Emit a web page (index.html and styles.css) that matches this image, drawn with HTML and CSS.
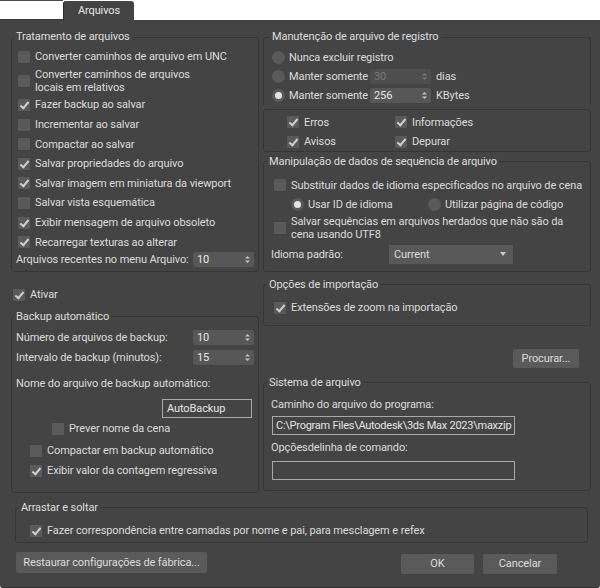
FILE: index.html
```html
<!DOCTYPE html>
<html lang="pt">
<head>
<meta charset="utf-8">
<title>Arquivos</title>
<link rel="stylesheet" href="styles.css">
</head>
<body>
<div class="tabbar">
  <div class="tab-spacer"></div>
  <div class="tab">Arquivos</div>
  <div class="tab-rest"></div>
</div>
<div class="panel">
  <div class="columns">
    <div class="col col-left">
      <fieldset class="group g-files">
        <legend>Tratamento de arquivos</legend>
        <div class="body">
          <label class="row ind"><span class="box"></span>Converter caminhos de arquivo em UNC</label>
          <label class="row ind two"><span class="box"></span><span>Converter caminhos de arquivos<br>locais em relativos</span></label>
          <label class="row ind"><span class="box on"></span>Fazer backup ao salvar</label>
          <label class="row ind"><span class="box"></span>Incrementar ao salvar</label>
          <label class="row ind"><span class="box"></span>Compactar ao salvar</label>
          <label class="row ind"><span class="box on"></span>Salvar propriedades do arquivo</label>
          <label class="row ind"><span class="box on"></span>Salvar imagem em miniatura da viewport</label>
          <label class="row ind"><span class="box"></span>Salvar vista esquemática</label>
          <label class="row ind"><span class="box on"></span>Exibir mensagem de arquivo obsoleto</label>
          <label class="row ind"><span class="box on"></span>Recarregar texturas ao alterar</label>
          <div class="row spinrow">
            <span>Arquivos recentes no menu Arquivo:</span>
            <span class="spin"><span>10</span><svg viewBox="0 0 5 9" class="arrows"><path d="M0 3.5 L2.5 1 L5 3.5Z M0 5.5 L2.5 8 L5 5.5Z"/></svg></span>
          </div>
        </div>
      </fieldset>

      <label class="row ind ativar"><span class="box on"></span>Ativar</label>

      <fieldset class="group g-backup">
        <legend>Backup automático</legend>
        <div class="body">
          <div class="row r20 spinrow">
            <span>Número de arquivos de backup:</span>
            <span class="spin"><span>10</span><svg viewBox="0 0 5 9" class="arrows"><path d="M0 3.5 L2.5 1 L5 3.5Z M0 5.5 L2.5 8 L5 5.5Z"/></svg></span>
          </div>
          <div class="row r20 spinrow">
            <span>Intervalo de backup (minutos):</span>
            <span class="spin"><span>15</span><svg viewBox="0 0 5 9" class="arrows"><path d="M0 3.5 L2.5 1 L5 3.5Z M0 5.5 L2.5 8 L5 5.5Z"/></svg></span>
          </div>
          <div class="row r20 name-label">Nome do arquivo de backup automático:</div>
          <div class="field autobackup">AutoBackup</div>
          <label class="row r20 prever"><span class="box"></span>Prever nome da cena</label>
          <label class="row r20 sub"><span class="box"></span>Compactar em backup automático</label>
          <label class="row r20 sub"><span class="box on"></span>Exibir valor da contagem regressiva</label>
        </div>
      </fieldset>
    </div>

    <div class="col col-right">
      <fieldset class="group g-log">
        <legend>Manutenção de arquivo de registro</legend>
        <div class="body">
          <label class="row r19"><span class="radio"></span>Nunca excluir registro</label>
          <label class="row r19"><span class="radio"></span><span class="keep">Manter somente</span><span class="spin disabled"><span>30</span><svg viewBox="0 0 5 9" class="arrows"><path d="M0 3.5 L2.5 1 L5 3.5Z M0 5.5 L2.5 8 L5 5.5Z"/></svg></span><span class="unit">dias</span></label>
          <label class="row r19"><span class="radio on"></span><span class="keep">Manter somente</span><span class="spin"><span>256</span><svg viewBox="0 0 5 9" class="arrows"><path d="M0 3.5 L2.5 1 L5 3.5Z M0 5.5 L2.5 8 L5 5.5Z"/></svg></span><span class="unit">KBytes</span></label>
        </div>
      </fieldset>

      <div class="group g-levels">
        <label class="row lv"><span class="box on"></span>Erros</label>
        <label class="row lv"><span class="box on"></span>Informações</label>
        <label class="row lv"><span class="box on"></span>Avisos</label>
        <label class="row lv"><span class="box on"></span>Depurar</label>
      </div>

      <fieldset class="group g-strings">
        <legend>Manipulação de dados de sequência de arquivo</legend>
        <div class="body">
          <label class="row r19"><span class="box"></span>Substituir dados de idioma especificados no arquivo de cena</label>
          <div class="row r19 radios">
            <label class="radio-opt"><span class="radio on"></span>Usar ID de idioma</label>
            <label class="radio-opt"><span class="radio"></span>Utilizar página de código</label>
          </div>
          <label class="row two utf"><span class="box"></span><span>Salvar sequências em arquivos herdados que não são da<br>cena usando UTF8</span></label>
          <div class="row r19 lang">
            <span class="lang-label">Idioma padrão:</span>
            <span class="combo"><span>Current</span><svg viewBox="0 0 6 4" class="drop"><path d="M0 0 L6 0 L3 4Z"/></svg></span>
          </div>
        </div>
      </fieldset>

      <fieldset class="group g-import">
        <legend>Opções de importação</legend>
        <div class="body">
          <label class="row r20"><span class="box on"></span>Extensões de zoom na importação</label>
        </div>
      </fieldset>

      <button class="btn browse">Procurar...</button>

      <fieldset class="group g-fs">
        <legend>Sistema de arquivo</legend>
        <div class="body">
          <div class="row r19">Caminho do arquivo do programa:</div>
          <div class="field path">C:\Program Files\Autodesk\3ds Max 2023\maxzip</div>
          <div class="row r19 cmd-label">Opçõesdelinha de comando:</div>
          <div class="field path"></div>
        </div>
      </fieldset>
    </div>
  </div>

  <fieldset class="group g-drag">
    <legend>Arrastar e soltar</legend>
    <div class="body">
      <label class="row r18"><span class="box on"></span>Fazer correspondência entre camadas por nome e pai, para mesclagem e refex</label>
    </div>
  </fieldset>

  <div class="buttons">
    <button class="btn restore">Restaurar configurações de fábrica...</button>
    <span class="spacer"></span>
    <button class="btn ok">OK</button>
    <button class="btn cancel">Cancelar</button>
  </div>
</div>
</body>
</html>
```

FILE: styles.css
```css
* { box-sizing: border-box; }
html, body { margin: 0; padding: 0; }
body {
  width: 600px;
  height: 588px;
  overflow: hidden;
  background: #ffffff;
  font-family: Roboto, "Liberation Sans", sans-serif;
  font-size: 11px;
  letter-spacing: -0.1px;
  color: #dcdcdc;
}

/* tab strip */
.tabbar { display: flex; height: 20px; background: #ffffff; }
.tab-spacer { width: 63px; border-top: 1px solid #4a4a4a; border-bottom: 1px solid #3a3a3a; }
.tab {
  width: 71px;
  margin-top: 1px;
  background: #444444;
  border-left: 1px solid #2c2c2c;
  border-radius: 3px 3px 0 0;
  text-align: center;
  line-height: 19px;
  color: #e6e6e6;
}
.tab-rest { flex: 1; }

/* main panel */
.panel {
  height: 568px;
  background: #444444;
  padding: 10px 9px 0 11px;
  border-bottom: 1px solid #333333;
  border-radius: 0 0 3px 3px;
  display: flex;
  flex-direction: column;
}
.columns { display: flex; gap: 4px; }
.col { display: flex; flex-direction: column; }
.col-left { width: 248px; }
.col-right { width: 328px; }

/* group boxes */
.group {
  margin: 0;
  padding: 0;
  min-width: 0;
  border: 1px solid #363636;
  border-radius: 3px;
}
.group > legend {
  margin-left: 3px;
  padding: 0 2px;
  height: 14px;
  line-height: 14px;
  color: #dedede;
}

/* rows */
.row { display: flex; align-items: center; height: 19.6px; white-space: nowrap; }
.row.r20 { height: 20px; }
.row.r19 { height: 19px; }
.row.r18 { height: 18px; }
.row.two { height: 28.4px; line-height: 13px; }

.box {
  position: relative;
  flex: none;
  width: 12px;
  height: 12px;
  margin-right: 5px;
  background: #5a5a5a;
  border-radius: 1px;
}
.box.on::after {
  content: "";
  position: absolute;
  left: 4px;
  top: 1px;
  width: 3px;
  height: 7px;
  border: solid #d0d0d0;
  border-width: 0 2px 2px 0;
  transform: rotate(40deg);
}
.radio {
  flex: none;
  width: 13px;
  height: 13px;
  margin-right: 4px;
  border-radius: 50%;
  background: #5a5a5a;
  display: flex;
  align-items: center;
  justify-content: center;
}
.radio.on::after {
  content: "";
  width: 7px;
  height: 7px;
  border-radius: 50%;
  background: #e4e4e4;
}

.spin {
  flex: none;
  width: 61px;
  height: 15px;
  padding: 0 4px;
  background: #575757;
  border-radius: 2px;
  color: #e8e8e8;
  display: flex;
  align-items: center;
  justify-content: space-between;
}
.spin .arrows { width: 5px; height: 9px; fill: #c4c4c4; }
.spin.disabled { background: #4e4e4e; color: #7a7a7a; }
.spin.disabled .arrows { fill: #777777; }

.field {
  height: 19px;
  border: 1px solid #a8a8a8;
  background: #444444;
  padding-left: 4px;
  line-height: 17px;
  color: #e4e4e4;
  white-space: nowrap;
  overflow: hidden;
}

.btn {
  height: 20px;
  padding: 0;
  border: none;
  border-radius: 2px;
  background: #5a5a5a;
  color: #dcdcdc;
  font-family: inherit;
  font-size: 11px;
  letter-spacing: -0.1px;
}

/* left column */
.g-files .body { padding: 3.2px 4px 4px 4px; }
.g-files > legend, .g-backup > legend { margin-left: 2px; }
.ind { margin-left: 2px; }
.spinrow { justify-content: space-between; }
.g-files .spinrow { height: 15px; }
.ativar { margin-top: 13.2px; margin-bottom: 5.2px; }
.g-backup .body { padding: 4px 4px 11px 4px; display: flex; flex-direction: column; }
.name-label { margin-top: 6px; }
.autobackup { align-self: flex-end; width: 90px; margin: 5px 2px 0 0; }
.prever { margin-left: 36px; margin-top: 1px; }
.sub { margin-left: 14px; }
.prever + .sub { margin-top: 2px; }

/* right column */
.g-log { border-bottom: none; border-radius: 3px 3px 0 0; }
.g-log > legend { margin-left: 6px; }
.g-log .body { padding: 4px 8px 0 8px; }
.keep { width: 81px; }
.unit { margin-left: 5px; }

.g-levels {
  margin-top: 4px;
  padding: 2.5px 0 0 23px;
  height: 42.5px;
  display: grid;
  grid-template-columns: 108px 1fr;
  grid-auto-rows: 19.5px;
}
.lv { height: 19.5px; }

.g-strings { margin-top: 3px; }
.g-strings .body { padding: 7px 10px 7px 10px; }
.radios { margin-left: 17px; }
.radio-opt { display: flex; align-items: center; }
.radio-opt:first-child { width: 137px; }
.utf { height: 29px; }
.lang { margin-top: 3px; }
.lang-label { width: 118px; margin-left: -3px; }
.combo {
  width: 124px;
  height: 19px;
  padding: 0 7px 0 5px;
  background: #595959;
  display: flex;
  align-items: center;
  justify-content: space-between;
  color: #dcdcdc;
}
.combo .drop { width: 6px; height: 4px; fill: #c8c8c8; }

.g-import { margin-top: 6px; }
.g-import .body { padding: 6px 10px 7px 10px; }

.browse { align-self: flex-end; width: 66px; height: 19px; margin: 23px 12px 0 0; }

.g-fs { margin-top: 8px; }
.g-fs .body { padding: 5px 7px 10px 7px; }
.g-fs .path { margin: 2px 0 0 1px; width: 243px; letter-spacing: -0.25px; padding-left: 3px; }
.cmd-label { margin-top: 3px; }
.cmd-label + .path { margin-top: 4px; }

/* bottom */
.g-drag { margin: 8px 3px 0 4px; }
.g-drag .body { padding: 7px 14px 2px 14px; }

.buttons { display: flex; align-items: flex-start; margin-top: 9px; }
.restore { width: 191px; height: 21px; margin-left: 5px; }
.spacer { flex: 1; }
.ok { width: 73px; margin-top: 2px; }
.cancel { width: 74px; margin: 2px 34px 0 9px; }
```
